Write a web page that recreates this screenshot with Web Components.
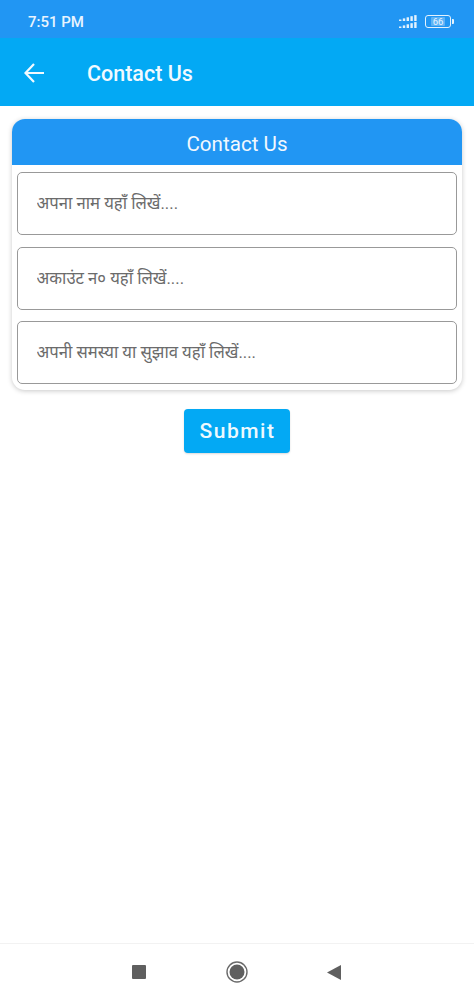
<!DOCTYPE html>
<html lang="hi">
<head>
<meta charset="utf-8">
<title>Contact Us</title>
<style>
  html, body { margin: 0; padding: 0; height: 100%; }
  body { font-family: Roboto, "Noto Sans", sans-serif; background: #fff; }
  contact-screen { height: 1000px; }
</style>
</head>
<body>
<contact-screen>
  <status-bar time="7:51 PM" level="66"></status-bar>
  <app-bar heading="Contact Us"></app-bar>
  <form-card heading="Contact Us">
    <text-field placeholder="अपना नाम यहाँ लिखें...."></text-field>
    <text-field placeholder="अकाउंट न० यहाँ लिखें...."></text-field>
    <text-field placeholder="अपनी समस्या या सुझाव यहाँ लिखें...."></text-field>
  </form-card>
  <submit-button>Submit</submit-button>
  <nav-bar></nav-bar>
</contact-screen>

<script>
class ContactScreen extends HTMLElement {
  constructor () {
    super()
    this.attachShadow({ mode: 'open' }).innerHTML = `
      <style>
        :host { display: flex; flex-direction: column; width: 474px; background: #fff; }
        ::slotted(nav-bar) { margin-top: auto; }
      </style>
      <slot></slot>`
  }
}

class StatusBar extends HTMLElement {
  constructor () {
    super()
    const time = this.getAttribute('time')
    const level = this.getAttribute('level')
    // signal bars, two rows of dots growing to the right
    let bars = ''
    for (let i = 0; i < 5; i++) {
      const h = 1.5 + i * 1.1
      bars += `<rect x="${i * 3.8}" y="${6 - h}" width="2.4" height="${h}"/>`
      bars += `<rect x="${i * 3.8}" y="${13 - h}" width="2.4" height="${h}"/>`
    }
    this.attachShadow({ mode: 'open' }).innerHTML = `
      <style>
        :host {
          display: flex; align-items: center; justify-content: space-between;
          height: 38px; box-sizing: border-box; padding: 5px 23px 0 28px;
          background: #2196f3; color: #e8f4fe;
          font: 500 15px Roboto, sans-serif;
        }
        .right { display: flex; align-items: center; gap: 8px; }
        .battery {
          display: flex; align-items: center; justify-content: center;
          width: 24px; height: 11px; border: 1.5px solid #e3f2fd; border-radius: 3px;
          font-size: 9.5px; font-weight: 400; line-height: 1; position: relative;
        }
        .battery::after {
          content: ''; position: absolute; right: -4px; top: 3px;
          width: 2px; height: 5px; background: #e3f2fd; border-radius: 0 1px 1px 0;
        }
        .fill { background: rgba(255,255,255,.28); padding: 0 2px; border-radius: 1px; }
      </style>
      <span>${time}</span>
      <span class="right">
        <svg width="18" height="13" viewBox="0 0 18 13" fill="#e3f2fd">${bars}</svg>
        <span class="battery"><span class="fill">${level}</span></span>
      </span>`
  }
}

class AppBar extends HTMLElement {
  constructor () {
    super()
    this.attachShadow({ mode: 'open' }).innerHTML = `
      <style>
        :host {
          display: flex; align-items: center; gap: 43px;
          height: 68px; box-sizing: border-box; padding: 0 24px; margin-bottom: 13px;
          background: #03a9f4; color: #f1faff;
          font: 500 21.500px Roboto, sans-serif;
        }
        span { padding-top: 3px; }
        svg { display: block; flex: none; margin-top: 1px; }
      </style>
      <svg width="20" height="20" viewBox="0 0 20 20" fill="none" stroke="#f1faff" stroke-width="2.2">
        <path d="M20 10H2M10 1 1.500 10l8.500 9"/>
      </svg>
      <span>${this.getAttribute('heading')}</span>`
  }
}

class FormCard extends HTMLElement {
  constructor () {
    super()
    this.attachShadow({ mode: 'open' }).innerHTML = `
      <style>
        :host {
          display: block; margin: 0 12px; background: #fff;
          border-radius: 13px; overflow: hidden;
          box-shadow: 0 1px 5px rgba(0,0,0,.22);
        }
        header {
          height: 46px; box-sizing: border-box; padding-top: 3px;
          display: flex; align-items: center; justify-content: center;
          background: #2196f3; color: #f1f8fe; font: 400 20.600px Roboto, sans-serif;
        }
        .fields { display: flex; flex-direction: column; gap: 11.5px; padding: 7px 5px 6px; }
      </style>
      <header>${this.getAttribute('heading')}</header>
      <div class="fields"><slot></slot></div>`
  }
}

class TextField extends HTMLElement {
  constructor () {
    super()
    this.attachShadow({ mode: 'open' }).innerHTML = `
      <style>
        :host { display: block; }
        input {
          display: block; width: 100%; height: 63px; box-sizing: border-box;
          padding: 0 18.500px; border: 1.5px solid #999; border-radius: 5px;
          background: #fff; outline: none;
          font: 400 16.700px Roboto, "Noto Sans", "Noto Sans Devanagari", sans-serif;
        }
        input::placeholder { color: #6b6b6b; opacity: 1; }
      </style>
      <input type="text" placeholder="${this.getAttribute('placeholder')}">`
  }
}

class SubmitButton extends HTMLElement {
  constructor () {
    super()
    this.attachShadow({ mode: 'open' }).innerHTML = `
      <style>
        :host { display: flex; justify-content: center; margin-top: 19px; }
        button {
          width: 106px; height: 44px; border: 0; border-radius: 4px; padding: 0 0 0 1px;
          background: #03a9f4; color: #eef9fe;
          font: 500 21px Roboto, sans-serif; letter-spacing: 1.5px;
          box-shadow: 0 1px 2px rgba(0,0,0,.15);
        }
      </style>
      <button type="button"><slot></slot></button>`
  }
}

class NavBar extends HTMLElement {
  constructor () {
    super()
    this.attachShadow({ mode: 'open' }).innerHTML = `
      <style>
        :host {
          display: flex; align-items: center; justify-content: space-between;
          height: 57px; box-sizing: border-box; padding: 0 133px 0 132px;
          border-top: 1px solid #f2f2f2; background: #fff;
        }
        svg { display: block; }
      </style>
      <svg width="14" height="14" viewBox="0 0 14 14"><rect width="14" height="14" rx="1" fill="#5f5f5f"/></svg>
      <svg width="22" height="22" viewBox="0 0 22 22">
        <circle cx="11" cy="11" r="10" fill="none" stroke="#6a6a6a" stroke-width="1.4"/>
        <circle cx="11" cy="11" r="7.500" fill="#5f5f5f"/>
      </svg>
      <svg width="14" height="15" viewBox="0 0 14 15"><path d="M0 7.500 14 0v15z" fill="#5f5f5f"/></svg>`
  }
}

customElements.define('contact-screen', ContactScreen)
customElements.define('status-bar', StatusBar)
customElements.define('app-bar', AppBar)
customElements.define('form-card', FormCard)
customElements.define('text-field', TextField)
customElements.define('submit-button', SubmitButton)
customElements.define('nav-bar', NavBar)
</script>
</body>
</html>
